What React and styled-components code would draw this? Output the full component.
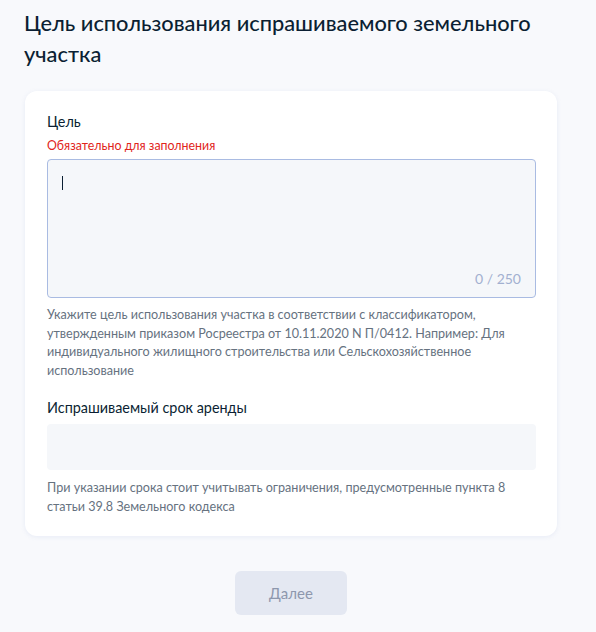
import React from "react";
import styled, { createGlobalStyle } from "styled-components";

const GlobalStyle = createGlobalStyle`
  body {
    margin: 0;
    background: #f8f9fc;
    font-family: Lato, "Noto Sans", sans-serif;
    color: #0b1f33;
  }
`;

const Page = styled.div`
  width: 596px;
  min-height: 632px;
  padding: 7px 24px 0 24px;
  box-sizing: border-box;
`;

const Title = styled.h1`
  margin: 0 0 22px 0;
  font-size: 21.8px;
  font-weight: 500;
  line-height: 31px;
  color: #0b1f33;
`;

const Card = styled.div`
  margin-left: 1px;
  width: 532px;
  box-sizing: border-box;
  background: #ffffff;
  border-radius: 12px;
  box-shadow: 0 1px 4px rgba(230, 234, 245, 0.9);
  padding: 22px 21px 20px 22px;
`;

const Field = styled.div`
  display: flex;
  flex-direction: column;
  margin-bottom: ${(p) => p.$gap || 0}px;
`;

const Label = styled.div`
  font-size: 14.4px;
  line-height: 18px;
  color: #0b1f33;
  margin-bottom: ${(p) => p.$mb || 7}px;
`;

const Required = styled.div`
  font-size: 12.4px;
  line-height: 16px;
  color: #e1251b;
  margin-bottom: 5px;
`;

const AreaBox = styled.div`
  position: relative;
  height: 139px;
  box-sizing: border-box;
  background: #f5f7fa;
  border: 1px solid #a9bbe2;
  border-radius: 4px;
`;

const Caret = styled.span`
  position: absolute;
  left: 14px;
  top: 16px;
  width: 1px;
  height: 14px;
  background: #0b1f33;
`;

const Counter = styled.span`
  position: absolute;
  right: 14px;
  bottom: 10px;
  font-size: 14px;
  color: #a2b0d0;
`;

const Input = styled.div`
  height: 46px;
  background: #f5f7fa;
  border-radius: 4px;
`;

const Hint = styled.p`
  margin: ${(p) => p.$mt || 8}px 0 0 0;
  font-size: 12.6px;
  line-height: 18.5px;
  color: #66727f;
`;

const Footer = styled.div`
  display: flex;
  justify-content: center;
  width: 532px;
  margin-left: 1px;
  padding-top: 35px;
`;

const Button = styled.button`
  width: 112px;
  height: 44px;
  border: none;
  border-radius: 6px;
  background: #e4e8f2;
  color: #8d97ad;
  font-family: Lato, "Noto Sans", sans-serif;
  font-size: 15px;
`;

export default function App() {
  return (
    <>
      <GlobalStyle />
      <Page>
        <Title>Цель использования испрашиваемого земельного участка</Title>
        <Card>
          <Field $gap={19}>
            <Label $mb={7}>Цель</Label>
            <Required>Обязательно для заполнения</Required>
            <AreaBox>
              <Caret />
              <Counter>0 / 250</Counter>
            </AreaBox>
            <Hint>
              Укажите цель использования участка в соответствии с классификатором,
              утвержденным приказом Росреестра от 10.11.2020 N П/0412. Например: Для
              индивидуального жилищного строительства или Сельскохозяйственное
              использование
            </Hint>
          </Field>
          <Field>
            <Label>Испрашиваемый срок аренды</Label>
            <Input />
            <Hint $mt={9}>
              При указании срока стоит учитывать ограничения, предусмотренные пункта 8
              статьи 39.8 Земельного кодекса
            </Hint>
          </Field>
        </Card>
        <Footer>
          <Button disabled>Далее</Button>
        </Footer>
      </Page>
    </>
  );
}
